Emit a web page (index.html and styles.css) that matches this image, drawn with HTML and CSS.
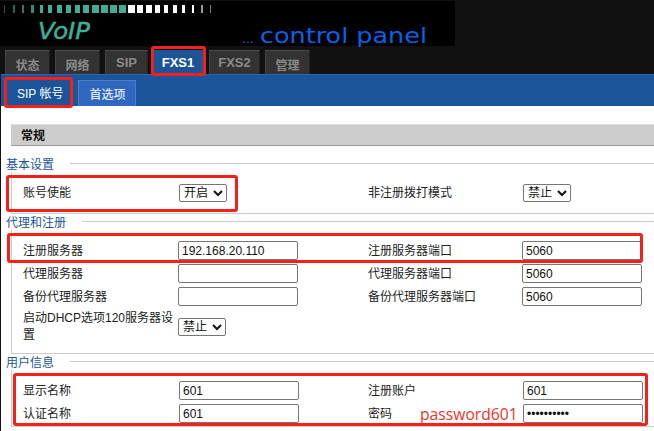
FILE: index.html
```html
<!DOCTYPE html>
<html lang="zh-CN">
<head>
    <meta charset="UTF-8">
    <title>VoIP control panel</title>
    <link rel="stylesheet" href="styles.css">
</head>
<body>
<div class="top">
    <svg class="banner" width="455" height="46" viewBox="0 0 455 46">
        <rect width="455" height="45" fill="#000"/>
        <g fill="#3fae96">
            <rect x="4" y="4" width="1" height="8" opacity=".5"/>
            <rect x="13" y="4" width="2" height="8" opacity=".6"/>
            <rect x="22" y="4" width="2" height="8" opacity=".7"/>
            <rect x="31" y="4" width="3" height="8" opacity=".8"/>
            <rect x="40" y="4" width="3" height="8"/>
            <rect x="48" y="4" width="4" height="8"/>
            <rect x="57" y="4" width="5" height="8"/>
            <rect x="66" y="4" width="5" height="8"/>
            <rect x="75" y="4" width="5" height="8"/>
            <rect x="83" y="4" width="6" height="8"/>
            <rect x="92" y="4" width="7" height="8"/>
            <rect x="101" y="4" width="7" height="8"/>
            <rect x="110" y="4" width="7" height="8"/>
            <rect x="119" y="4" width="7" height="8"/>
        </g>
        <g fill="#fff">
            <rect x="128" y="4" width="7" height="8"/>
            <rect x="137" y="4" width="6" height="8"/>
            <rect x="146" y="4" width="6" height="8"/>
            <rect x="155" y="4" width="5" height="8"/>
            <rect x="164" y="4" width="4" height="8"/>
            <rect x="173" y="4" width="4" height="8"/>
            <rect x="182" y="4" width="3" height="8"/>
            <rect x="192" y="4" width="2" height="8"/>
            <rect x="201" y="4" width="2" height="8" opacity=".6"/>
            <rect x="210" y="4" width="1" height="8" opacity=".5"/>
        </g>
        <text class="logo-voip" x="38" y="38" textLength="52" lengthAdjust="spacingAndGlyphs">VoIP</text>
        <text class="logo-dots" x="242" y="42" textLength="12" lengthAdjust="spacing">...</text>
        <text class="logo-panel" x="260" y="42" textLength="167" lengthAdjust="spacingAndGlyphs">control panel</text>
    </svg>
    <div class="tabs">
        <a class="tab cn w45">状态</a>
        <a class="tab cn w45">网络</a>
        <a class="tab w43">SIP</a>
        <a class="tab active w50">FXS1</a>
        <a class="tab w51">FXS2</a>
        <a class="tab cn w45">管理</a>
    </div>
</div>

<div class="content">
    <div class="subtabs">
        <a class="subtab current">SIP 帐号</a>
        <a class="subtab">首选项</a>
    </div>

    <h2 class="title">常规</h2>

    <fieldset class="group first">
        <legend>基本设置</legend>
        <div class="grid">
            <label>账号使能</label>
            <select><option>开启</option></select>
            <label>非注册拨打模式</label>
            <select><option>禁止</option></select>
        </div>
    </fieldset>

    <fieldset class="group">
        <legend>代理和注册</legend>
        <div class="grid narrow">
            <label>注册服务器</label>
            <input type="text" value="192.168.20.110">
            <label>注册服务器端口</label>
            <input type="text" value="5060">
            <label>代理服务器</label>
            <input type="text">
            <label>代理服务器端口</label>
            <input type="text" value="5060">
            <label>备份代理服务器</label>
            <input type="text">
            <label>备份代理服务器端口</label>
            <input type="text" value="5060">
            <label class="two-line">启动DHCP选项120服务器设<br>置</label>
            <select><option>禁止</option></select>
        </div>
    </fieldset>

    <fieldset class="group">
        <legend>用户信息</legend>
        <div class="grid">
            <label>显示名称</label>
            <input type="text" value="601">
            <label>注册账户</label>
            <input type="text" value="601">
            <label>认证名称</label>
            <input type="text" value="601">
            <label>密码</label>
            <input type="password" value="password60">
        </div>
    </fieldset>
</div>

<!-- red marks drawn over the screenshot -->
<div class="mark mark-tab"></div>
<div class="mark mark-sub"></div>
<div class="mark mark-basic"></div>
<div class="mark mark-server"></div>
<div class="mark mark-user"></div>
<span class="note">password601</span>
</body>
</html>
```

FILE: styles.css
```css
* {
    box-sizing: border-box;
}

body {
    margin: 0;
    height: 431px;
    overflow: hidden;
    position: relative;
    background: #fff;
    color: #222;
    font-family: "Liberation Sans", "Noto Sans CJK SC", sans-serif;
    font-size: 12px;
}

.top {
    height: 74px;
    background: #111;
    padding-top: 1px;
}

.banner {
    display: block;
    overflow: visible;
}

.logo-voip {
    font-family: "DejaVu Sans", sans-serif;
    font-size: 23px;
    font-style: italic;
    fill: #3fae96;
    stroke: #3fae96;
    stroke-width: .5px;
}

.logo-dots,
.logo-panel {
    font-family: "DejaVu Sans", sans-serif;
    font-size: 22px;
    fill: #0a60e8;
}

.logo-dots {
    font-size: 13px;
}

.tabs {
    display: flex;
    gap: 5px;
    padding: 3px 0 0 5px;
}

.tab {
    height: 24px;
    padding-top: 4px;
    background: #333;
    border-top: 1px solid #4a4a4a;
    border-left: 1px solid #444;
    border-right: 1px solid #222;
    color: #8a8a8a;
    font-size: 13px;
    font-weight: bold;
    text-align: center;
}

.tab.cn {
    padding-top: 5px;
    font-size: 12px;
}

.w43 { width: 43px; }
.w45 { width: 45px; }
.w50 { width: 50px; }
.w51 { width: 51px; margin-left: 1px; }

.tab.active {
    background: #1b5499;
    border-color: #1b5499;
    color: #fff;
}

.content {
    border-left: 1px solid #111;
    height: 357px;
}

.subtabs {
    display: flex;
    align-items: flex-end;
    gap: 6px;
    height: 32px;
    padding-left: 4px;
    background: #1b5499;
    border-top: 1px solid #2a66b4;
}

.subtab {
    height: 26px;
    padding: 4px 10px 0;
    background: #3068c0;
    border: 1px solid #4a7fd0;
    border-bottom: 0;
    color: #fff;
    font-size: 12px;
}

.subtab.current {
    height: 28px;
    padding: 6px 9px 0 12px;
    background: #1b5499;
    border: 0;
}

.title {
    margin: 18px 0 0 10px;
    height: 22px;
    padding: 1px 0 0 10px;
    background: #ccc;
    border-top: 1px solid #ddd;
    border-bottom: 1px solid #999;
    color: #111;
    font-size: 12px;
    font-weight: bold;
}

.group {
    margin: -2px 0 0 10px;
    padding: 0 0 0 11px;
    border: 1px solid #ccc;
    border-right: 0;
    min-width: 0;
}

.group.first {
    margin-top: 8px;
}

.group legend {
    margin-left: -17px;
    padding: 4px 16px 0 0;
    color: #1b5499;
    font-size: 12px;
    line-height: 14px;
}

.grid {
    display: grid;
    grid-template-columns: 156px 189px 155px 120px;
    row-gap: 4px;
    align-items: center;
    padding: 11px 0 3px;
}

.grid.narrow {
    grid-template-columns: 155px 190px 154px 120px;
    padding-bottom: 9px;
}

.group.first .grid {
    padding-bottom: 11px;
}

label {
    padding-top: 2px;
    line-height: 17px;
}

label.two-line {
    padding-top: 0;
}

input {
    width: 120px;
    height: 19px;
    padding: 1px 3px;
    border: 1px solid #767676;
    border-radius: 2px;
    background: #fff;
    color: #111;
    font-family: inherit;
    font-size: 12px;
}

select {
    justify-self: start;
    width: 48px;
    height: 18px;
    font-family: inherit;
    font-size: 12px;
    background: #fff;
    color: #111;
    border: 1px solid #767676;
    border-radius: 2px;
}

.mark {
    position: absolute;
    border: 3px solid #f5201a;
    border-radius: 3px;
}

.mark-tab {
    left: 151px;
    top: 46px;
    width: 55px;
    height: 30px;
}

.mark-sub {
    left: 4px;
    top: 77px;
    width: 69px;
    height: 31px;
}

.mark-basic {
    left: 6px;
    top: 175px;
    width: 232px;
    height: 37px;
}

.mark-server {
    left: 7px;
    top: 233px;
    width: 636px;
    height: 30px;
}

.mark-user {
    left: 13px;
    top: 373px;
    width: 635px;
    height: 53px;
}

.note {
    position: absolute;
    left: 420px;
    top: 403px;
    color: #f5302a;
    font-family: "Open Sans", sans-serif;
    font-size: 15.7px;
}
```
